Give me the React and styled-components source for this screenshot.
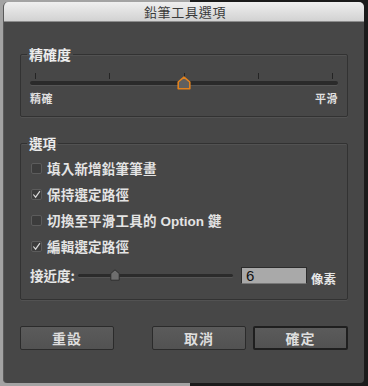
import React from 'react';
import styled, { createGlobalStyle } from 'styled-components';

const Global = createGlobalStyle`
    html, body {
        margin: 0;
        padding: 0;
        width: 368px;
        height: 386px;
        overflow: hidden;
        font-family: "Noto Sans CJK TC", "Noto Sans", sans-serif;
    }
`;

const S = {
    Desktop: styled.div`
        box-sizing: border-box;
        width: 368px;
        height: 386px;
        padding: 2px 4px 3px 3px;
        background: linear-gradient(to right, #a3a3a3 0, #a3a3a3 190px, #1b1b1b 190px);
    `,
    Window: styled.div`
        display: flex;
        flex-flow: column;
        height: 100%;
        background-color: #474747;
        border-radius: 5px 5px 4px 4px;
        border-left: 1px solid #5a5a5a;
        box-sizing: border-box;
        overflow: hidden;
    `,
    TitleBar: styled.div`
        display: flex;
        align-items: center;
        justify-content: center;
        height: 19px;
        flex: 0 0 19px;
        background: linear-gradient(#efefef, #d2d2d2);
        border-bottom: 1px solid #8c8c8c;
        font-size: 13px;
        letter-spacing: 0.7px;
        color: #3a3a3a;
        padding-left: 2px;
    `,
    Content: styled.div`
        display: flex;
        flex-flow: column;
        padding: 24px 16px 0 16px;
        color: #e6e6e6;
        font-weight: 700;
    `,
    Group: styled.fieldset`
        margin: ${p => p.$top || 0}px 0 0 0;
        padding: ${p => p.$pad};
        border: 1px solid #323232;
        border-radius: 2px;
        min-width: 0;
        box-shadow: 0 1px 0 #525252, inset 0 1px 0 #525252;
    `,
    Legend: styled.legend`
        margin-left: -3px;
        padding: 0 2px;
        font-size: ${p => p.$size}px;
        line-height: 16px;
        color: #ececec;
    `,
    Slider: styled.div`
        position: relative;
    `,
    Ticks: styled.div`
        display: flex;
        justify-content: space-between;
        height: 6px;
        padding: 0 5px;
    `,
    Tick: styled.span`
        width: 1px;
        background-color: #242424;
    `,
    Track: styled.div`
        margin-top: 2px;
        height: 4px;
        border-radius: 2px;
        background-color: #2a2a2a;
        box-shadow: 0 1px 0 #555;
    `,
    Thumb: styled.svg`
        position: absolute;
        left: calc(${p => p.$pos}% - 7px);
        top: 3px;
    `,
    EndLabels: styled.div`
        display: flex;
        justify-content: space-between;
        margin-top: 6px;
        font-size: 11px;
        line-height: 14px;
        letter-spacing: 0.5px;
        color: #e0e0e0;
    `,
    Options: styled.div`
        display: flex;
        flex-flow: column;
        gap: 6px;
    `,
    CheckRow: styled.label`
        display: flex;
        align-items: center;
        gap: 5px;
        height: 20px;
        font-size: 13.5px;
        letter-spacing: 0.2px;
        color: #e4e4e4;
    `,
    Box: styled.span`
        display: flex;
        align-items: center;
        justify-content: center;
        margin-left: 1px;
        width: 11px;
        height: 11px;
        box-sizing: border-box;
        border: 1px solid #5c5c5c;
        border-radius: 2px;
        background-color: #3c3c3c;
    `,
    Latin: styled.span`
        font-family: "Liberation Sans", Arial, sans-serif;
        letter-spacing: 0;
        margin: 0 4px;
    `,
    ProxRow: styled.div`
        display: flex;
        align-items: center;
        height: 20px;
        margin-top: 9px;
        font-size: 13.5px;
    `,
    MiniSlider: styled.div`
        position: relative;
        flex: 0 0 155px;
        height: 20px;
        margin-left: 3px;
        display: flex;
        align-items: center;
    `,
    MiniTrack: styled.div`
        width: 100%;
        height: 3px;
        border-radius: 2px;
        background-color: #2b2b2b;
        box-shadow: 0 1px 0 #555;
    `,
    MiniThumb: styled.svg`
        position: absolute;
        left: calc(${p => p.$pos}px - 5px);
        top: 4px;
    `,
    Input: styled.div`
        box-sizing: border-box;
        width: 66px;
        height: 17px;
        margin-left: 8px;
        padding-left: 4px;
        background-color: #a9a9a9;
        border: 1px solid #2c2c2c;
        border-bottom-color: #777;
        font-family: "Liberation Sans", Arial, sans-serif;
        font-weight: 400;
        font-size: 15px;
        line-height: 15px;
        color: #111;
    `,
    Unit: styled.span`
        margin-left: 4px;
        padding-top: 7px;
        font-size: 12.5px;
    `,
    Buttons: styled.div`
        display: flex;
        margin-top: 26px;
        gap: 7px;
    `,
    Spacer: styled.div`
        flex: 1;
    `,
    Button: styled.button`
        width: ${p => p.$w}px;
        height: 24px;
        box-sizing: border-box;
        border: ${p => (p.$default ? '2px solid #1f1f1f' : '1px solid #2b2b2b')};
        border-radius: 2px;
        background: linear-gradient(#5b5b5b, #525252);
        color: #dedede;
        font-family: "Noto Sans CJK TC", sans-serif;
        font-weight: 700;
        font-size: 14px;
        letter-spacing: 1px;
        padding: 0;
    `,
};

const Check = () => (
    <svg width="10" height="9" viewBox="0 0 10 9">
        <path d="M1.5 4.5 L4 7.5 L8.8 0.8" fill="none" stroke="#d8d8d8" strokeWidth="1.3" />
    </svg>
);

const Option = ({ checked, children }) => (
    <S.CheckRow>
        <S.Box>{checked && <Check />}</S.Box>
        <span>{children}</span>
    </S.CheckRow>
);

export default function App() {
    return (
        <>
            <Global />
            <S.Desktop>
                <S.Window>
                    <S.TitleBar>鉛筆工具選項</S.TitleBar>
                    <S.Content>
                        <S.Group $pad="11px 9px 11px">
                            <S.Legend $size={14}>精確度</S.Legend>
                            <S.Slider>
                                <S.Ticks>
                                    {[0, 1, 2, 3, 4].map(i => <S.Tick key={i} />)}
                                </S.Ticks>
                                <S.Track />
                                <S.Thumb $pos={50} width="14" height="14" viewBox="0 0 14 14">
                                    <path d="M7 1.2 L12.8 6 V12.8 H1.2 V6 Z" fill="#5f5f5f" stroke="#e2821e" strokeWidth="1.6" strokeLinejoin="round" />
                                </S.Thumb>
                                <S.EndLabels>
                                    <span>精確</span>
                                    <span>平滑</span>
                                </S.EndLabels>
                            </S.Slider>
                        </S.Group>
                        <S.Group $top={18} $pad="7px 9px 14px">
                            <S.Legend $size={13.5}>選項</S.Legend>
                            <S.Options>
                                <Option>填入新增鉛筆筆畫</Option>
                                <Option checked>保持選定路徑</Option>
                                <Option>切換至平滑工具的<S.Latin>Option</S.Latin>鍵</Option>
                                <Option checked>編輯選定路徑</Option>
                            </S.Options>
                            <S.ProxRow>
                                <span>接近度:</span>
                                <S.MiniSlider>
                                    <S.MiniTrack />
                                    <S.MiniThumb $pos={37} width="10" height="12" viewBox="0 0 10 12">
                                        <path d="M5 0.8 L9.2 4.5 V11.2 H0.8 V4.5 Z" fill="#6e6e6e" stroke="#2e2e2e" strokeWidth="1" />
                                    </S.MiniThumb>
                                </S.MiniSlider>
                                <S.Input>6</S.Input>
                                <S.Unit>像素</S.Unit>
                            </S.ProxRow>
                        </S.Group>
                        <S.Buttons>
                            <S.Button $w={94}>重設</S.Button>
                            <S.Spacer />
                            <S.Button $w={94}>取消</S.Button>
                            <S.Button $w={95} $default>確定</S.Button>
                        </S.Buttons>
                    </S.Content>
                </S.Window>
            </S.Desktop>
        </>
    );
}
